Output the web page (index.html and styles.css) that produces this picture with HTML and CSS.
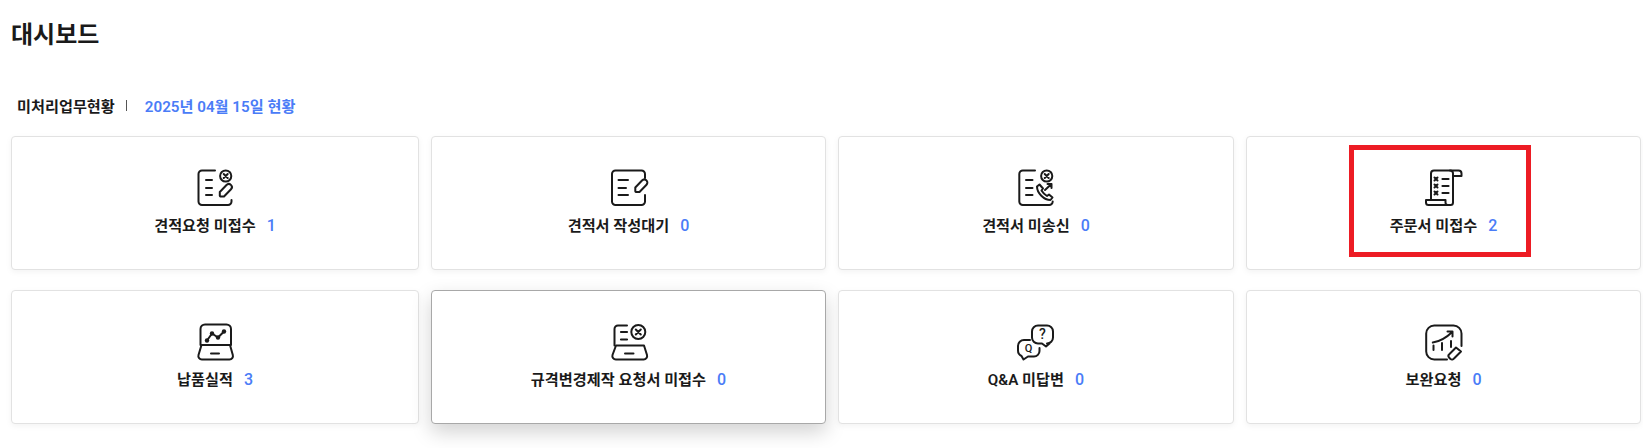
FILE: index.html
```html
<!DOCTYPE html>
<html lang="ko">
  <head>
    <meta charset="UTF-8" />
    <title>대시보드</title>
    <link rel="stylesheet" href="styles.css">
  </head>
  <body>
    <h1 class="page-title">대시보드</h1>

    <div class="status-line">
      <span class="status-name">미처리업무현황</span>
      <span class="status-sep"></span>
      <span class="status-date">2025년 04월 15일 현황</span>
    </div>

    <div class="cards">
      <a class="card">
        <svg class="icon" viewBox="0 0 40 40">
          <path d="M20 2.5H7A3.5 3.5 0 0 0 3.5 6V33.500A3.5 3.5 0 0 0 7 37H33A3.5 3.5 0 0 0 36.5 33.500V32" />
          <circle cx="30.7" cy="8" r="5.6" />
          <path d="M28.7 6 32.7 10M32.7 6 28.7 10M11 12H17M11 20H17M11 27H17" />
          <path d="M31.5 17A3 3 0 0 1 36 21.300L29 28.500H25.500A1 1 0 0 1 24.800 27.800V24Z" />
        </svg>
        <span class="label">견적요청 미접수<em class="count">1</em></span>
      </a>

      <a class="card">
        <svg class="icon" viewBox="0 0 40 40">
          <path d="M36 10V6A3.5 3.5 0 0 0 32.500 2.500H6.500A3.5 3.5 0 0 0 3 6V33.500A3.5 3.5 0 0 0 6.500 37H32.500A3.5 3.5 0 0 0 36 33.500V27" />
          <path d="M9.500 12H19M9.500 20H17M9.500 27H19" />
          <path d="M33 12.500A3 3 0 0 1 37.500 16.800L30.500 24H27A1 1 0 0 1 26.300 23.300V19.500Z" />
        </svg>
        <span class="label">견적서 작성대기<em class="count">0</em></span>
      </a>

      <a class="card">
        <svg class="icon" viewBox="0 0 40 40">
          <path d="M19 2.500H6.800A3.500 3.500 0 0 0 3.300 6V33.500A3.500 3.500 0 0 0 6.800 37H33.200A3.500 3.500 0 0 0 36.700 33.500" />
          <circle cx="30.700" cy="8" r="5.600" />
          <path d="M28.700 6 32.700 10M32.700 6 28.700 10M10 12H16.500M10 20H16.500M10 27H16.500" />
          <path d="M21 18.500 23.500 16.500 27 20.500 25.500 22.500C27 25 28.500 26.500 31 28L33 26.500 36.500 29.500 34.500 32C28 32 21 25 21 18.500Z" />
          <path d="M29 22 35.500 16M31.500 16H35.500V20" />
        </svg>
        <span class="label">견적서 미송신<em class="count">0</em></span>
      </a>

      <a class="card">
        <svg class="icon" viewBox="0 0 40 40">
          <path d="M29 6.500V34.500A2.500 2.500 0 0 1 26.500 37H4.500A2.500 2.500 0 0 1 2 34.500V32H21.500V34.500A2.500 2.500 0 0 0 24 37" />
          <path d="M7 32V5.500A3 3 0 0 1 10 2.500H34.500A3 3 0 0 1 37.500 5.500V8H29" />
          <path d="M29 5.500A3 3 0 0 0 26 2.500" />
          <path d="M18.500 11H24.500M18.500 18H24.500M18.500 25H24.500" class="thick" />
          <path d="M10.500 9.500 13.500 12.500M13.500 9.500 10.500 12.500M10.500 16.500 13.500 19.500M13.500 16.500 10.500 19.500M10.500 23.500 13.500 26.500M13.500 23.500 10.500 26.500" />
        </svg>
        <span class="label">주문서 미접수<em class="count">2</em></span>
      </a>

      <a class="card">
        <svg class="icon" viewBox="0 0 40 40">
          <path d="M5.500 23V7A4.500 4.500 0 0 1 10 2.500H31.500A4.500 4.500 0 0 1 36 7V23" />
          <path d="M6.500 23H35L37.800 33A3.500 3.500 0 0 1 34.500 37.500H7A3.500 3.500 0 0 1 3.500 33Z" />
          <path d="M16 31.500H24M12 18.500 17 11.500 23 15.500 29 9.500" />
          <g class="dots">
            <circle cx="12" cy="18.500" r="2.200" />
            <circle cx="17" cy="11.500" r="2.200" />
            <circle cx="23" cy="15.500" r="2.200" />
            <circle cx="29" cy="9.500" r="2.200" />
          </g>
        </svg>
        <span class="label">납품실적<em class="count">3</em></span>
      </a>

      <a class="card is-hover">
        <svg class="icon" viewBox="0 0 40 40">
          <path d="M18 3.500H9A3.500 3.500 0 0 0 5.500 7V23.500" />
          <path d="M12 10H18M12 17.500H18" class="thick" />
          <circle cx="29.300" cy="10" r="7" />
          <path d="M26.800 7.500 31.800 12.500M31.800 7.500 26.800 12.500" />
          <path d="M7 23.500H35L38 33A3.500 3.500 0 0 1 34.500 37.500H7A3.500 3.500 0 0 1 3.500 33Z" />
          <path d="M16 31.500H24.500" />
        </svg>
        <span class="label">규격변경제작 요청서 미접수<em class="count">0</em></span>
      </a>

      <a class="card">
        <svg class="icon" viewBox="0 0 40 40">
          <path d="M22 3.500H31A6 6 0 0 1 37 9.500V15.500A6 6 0 0 1 31 21.500H33.500L30 24.500 26 21.500H22A6 6 0 0 1 16 15.500V9.500A6 6 0 0 1 22 3.500Z" />
          <path d="M14 18H8A6 6 0 0 0 2 24V28.500A6 6 0 0 0 5.500 34L7.500 37.500 12 34.500H18A5.500 5.500 0 0 0 23.500 29V26" />
          <text class="glyph" x="26.500" y="16.500">?</text>
          <text class="glyph small" x="12.500" y="29.500">Q</text>
        </svg>
        <span class="label">Q&amp;A 미답변<em class="count">0</em></span>
      </a>

      <a class="card">
        <svg class="icon" viewBox="0 0 40 40">
          <path d="M37.500 24V11.500A8 8 0 0 0 29.500 3.500H10.200A8 8 0 0 0 2.200 11.500V29.500A8 8 0 0 0 10.200 37.500H23" />
          <path d="M8.800 20.500C16 19.500 22 16 28.200 10M23.500 9.500H28.500V14.500" />
          <path d="M9.500 23.500V28M18 21V28M27 19V25" />
          <path d="M32 25.500 37 29.500 30 36.500A2.500 2.500 0 0 1 26.500 37L25 35.500A2.500 2.500 0 0 1 25.500 32Z" />
        </svg>
        <span class="label">보완요청<em class="count">0</em></span>
      </a>

      <div class="mark"></div>
    </div>
  </body>
</html>
```

FILE: styles.css
```css
* {
  box-sizing: border-box;
  margin: 0;
  padding: 0;
}
html,
body {
  height: 100%;
  overflow: hidden;
}
body {
  background-color: #fff;
  color: #1a1a1a;
  font-family: Roboto, "Noto Sans CJK KR", sans-serif;
  padding: 20px 0 0 11px;
}

.page-title {
  font-size: 24px;
  line-height: 30px;
  font-weight: 600;
}

.status-line {
  display: flex;
  align-items: center;
  margin-top: 45px;
  padding-left: 6px;
  height: 20px;
  font-size: 15.2px;
  font-weight: 600;
}
.status-sep {
  width: 1px;
  height: 11px;
  margin: 0 18px 0 11px;
  background-color: #555;
}
.status-date {
  color: #4a7cf7;
}

.cards {
  position: relative;
  display: grid;
  grid-template-columns: 408px 395px 396px 395px;
  grid-auto-rows: 134px;
  column-gap: 12px;
  row-gap: 20px;
  margin-top: 21px;
}

.card {
  display: flex;
  flex-direction: column;
  align-items: center;
  justify-content: center;
  gap: 8px;
  padding-bottom: 2px;
  background-color: #fff;
  border: 1px solid #e2e2e2;
  border-radius: 4px;
  box-shadow: 0 2px 6px rgba(0, 0, 0, 0.05);
}
.card.is-hover {
  border-color: #a8a8a8;
  box-shadow: 0 8px 20px rgba(0, 0, 0, 0.18);
}

.icon {
  width: 40px;
  height: 40px;
  overflow: visible;
  fill: none;
  stroke: #1a1a1a;
  stroke-width: 2;
  stroke-linecap: round;
  stroke-linejoin: round;
}
.icon .thick {
  stroke-width: 2.2;
}
.icon .dots {
  fill: #1a1a1a;
  stroke: none;
}
.icon .glyph {
  fill: #1a1a1a;
  stroke: none;
  font-size: 14px;
  font-weight: 500;
  text-anchor: middle;
}
.icon .glyph.small {
  font-size: 11px;
}

.label {
  font-size: 15.2px;
  line-height: 20px;
  font-weight: 600;
}
.count {
  margin-left: 11px;
  color: #4a7cf7;
  font-size: 16px;
  font-style: normal;
  font-weight: 500;
}

/* red annotation box drawn over the 주문서 card */
.mark {
  position: absolute;
  left: 1338px;
  top: 9px;
  width: 182px;
  height: 112px;
  border: 5px solid #ed1c24;
  pointer-events: none;
}
```
